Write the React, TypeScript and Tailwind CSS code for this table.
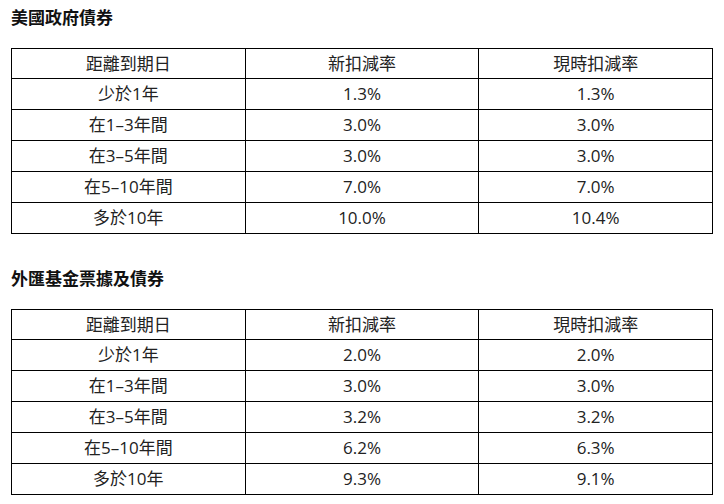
const rows1 = [
  ["少於1年", "1.3%", "1.3%"],
  ["在1–3年間", "3.0%", "3.0%"],
  ["在3–5年間", "3.0%", "3.0%"],
  ["在5–10年間", "7.0%", "7.0%"],
  ["多於10年", "10.0%", "10.4%"],
]

const rows2 = [
  ["少於1年", "2.0%", "2.0%"],
  ["在1–3年間", "3.0%", "3.0%"],
  ["在3–5年間", "3.2%", "3.2%"],
  ["在5–10年間", "6.2%", "6.3%"],
  ["多於10年", "9.3%", "9.1%"],
]

function RateTable({ title, rows }: { title: string; rows: string[][] }) {
  return (
    <section>
      <h2 className="h-[20px] text-[17px] leading-[20px] font-bold text-[#111]">{title}</h2>
      <table className="mt-[20px] w-[702px] table-fixed border-collapse text-[17px] text-[#222]">
        <thead>
          <tr className="h-[30px]">
            <th className="border border-black font-normal">距離到期日</th>
            <th className="border border-black font-normal">新扣減率</th>
            <th className="border border-black font-normal">現時扣減率</th>
          </tr>
        </thead>
        <tbody>
          {rows.map((r) => (
            <tr key={r[0]} className="h-[31px]">
              {r.map((c, i) => (
                <td key={i} className="border border-black text-center p-0">
                  {c}
                </td>
              ))}
            </tr>
          ))}
        </tbody>
      </table>
    </section>
  )
}

export default function App() {
  return (
    <div
      className="w-[724px] h-[504px] bg-white pl-[11px] pt-[8px] flex flex-col gap-[35px]"
      style={{ fontFamily: '"Open Sans", "Noto Sans CJK TC", sans-serif' }}
    >
      <RateTable title="美國政府債券" rows={rows1} />
      <RateTable title="外匯基金票據及債券" rows={rows2} />
    </div>
  )
}
